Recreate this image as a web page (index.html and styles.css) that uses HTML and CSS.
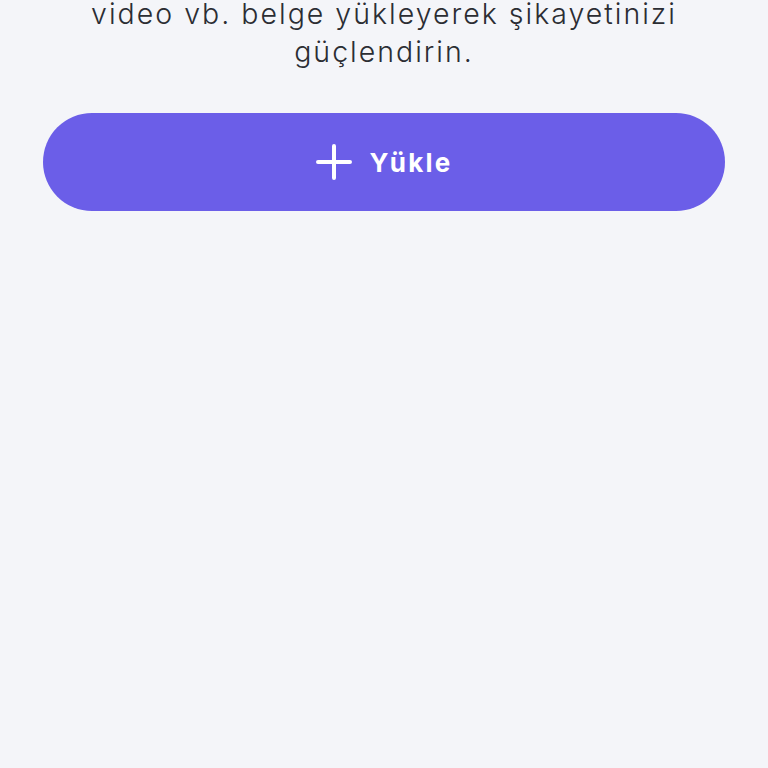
FILE: index.html
```html
<!DOCTYPE html>
<html lang="tr">
<head>
  <meta charset="UTF-8" />
  <meta name="viewport" content="width=device-width, initial-scale=1.0" />
  <title>Belge Yükle</title>
  <link rel="stylesheet" href="styles.css">
</head>
<body>
  <div class="upload-area">
    <p class="upload-text">video vb. belge yükleyerek şikayetinizi<br>güçlendirin.</p>
    <button class="upload-btn">
      <svg class="plus" viewBox="0 0 36 36" width="36" height="36" aria-hidden="true">
        <path d="M18 2v32M2 18h32" stroke="#fff" stroke-width="4" stroke-linecap="round" fill="none"/>
      </svg>
      <span>Yükle</span>
    </button>
  </div>
</body>
</html>
```

FILE: styles.css
```css
html, body { margin: 0; padding: 0; background: #f4f5f9; }
body { font-family: "Inter", "Noto Sans", sans-serif; color: #2b2d33; overflow: hidden; }
.upload-area { padding: 0 43px; display: flex; flex-direction: column; align-items: stretch; }
.upload-text { margin: -5px 0 0; font-size: 28.5px; font-weight: 300; line-height: 38px; text-align: center; letter-spacing: 2px; }
.upload-btn { margin-top: 42px; height: 98px; border: none; border-radius: 49px; background: #6b5ee8; color: #fff; display: flex; align-items: center; justify-content: center; gap: 18px; font-family: inherit; font-size: 26px; font-weight: 700; letter-spacing: 2.2px; cursor: pointer; }
.upload-btn .plus { width: 36px; height: 36px; }
```
